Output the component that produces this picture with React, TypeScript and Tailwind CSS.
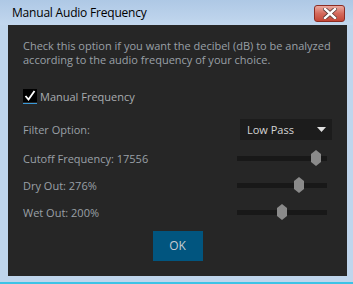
import React from "react";

function Thumb() {
  return (
    <svg width="10" height="16" viewBox="0 0 10 16" className="block">
      <polygon points="5,0 10,4 10,12 5,16 0,12 0,4" fill="#8a8a8a" />
    </svg>
  );
}

function SliderRow({ label, pos }: { label: string; pos: number }) {
  return (
    <div className="flex h-[27px] items-center justify-between">
      <span>{label}</span>
      <div className="relative mr-[5px] h-[5px] w-[90px] bg-[#181818]">
        <div className="absolute top-[-6px]" style={{ left: pos - 5 }}>
          <Thumb />
        </div>
      </div>
    </div>
  );
}

export default function App() {
  return (
    <div
      className="flex h-[284px] w-[353px] flex-col bg-[#bfd5ec] border-b-2 border-b-[#3cc3e6]"
      style={{ fontFamily: '"Segoe UI", "Open Sans", sans-serif' }}
    >
      <div className="flex h-[25px] items-center justify-between bg-gradient-to-b from-[#aec8e5] to-[#c2d7ee] pl-[12px] pr-[8px]">
        <span className="text-[12px] tracking-[-0.2px] text-black">Manual Audio Frequency</span>
        <div className="mt-[2px] flex h-[17px] w-[31px] items-center justify-center rounded-[3px] border border-[#8b2d24] bg-gradient-to-b from-[#eaa99f] via-[#d46a5c] to-[#c44636]">
          <svg width="14" height="11" viewBox="0 0 14 11">
            <path d="M2 1 L12 10 M12 1 L2 10" stroke="#5a3a36" strokeWidth="4" strokeLinecap="square" />
            <path d="M2 1 L12 10 M12 1 L2 10" stroke="#ffffff" strokeWidth="2.4" strokeLinecap="square" />
          </svg>
        </div>
      </div>
      <div className="ml-[8px] mr-[6px] flex h-[251px] flex-col bg-[#262626] px-[15px] pt-[14px] text-[11px] leading-[14px] text-[#9aa0a6]">
        <p className="leading-[14px]">
          Check this option if you want the decibel (dB) to be analyzed according to the audio frequency of your choice.
        </p>
        <div className="mt-[21px] flex h-[17px] items-center gap-[3px]">
          <div className="flex h-[15px] w-[14px] flex-col">
            <div className="flex h-[13px] w-[14px] items-center justify-center bg-black">
              <svg width="12" height="11" viewBox="0 0 12 11">
                <path d="M1.5 6 L4.5 9.5 L10.5 1" stroke="#ffffff" strokeWidth="1.8" fill="none" />
              </svg>
            </div>
            <div className="mt-[1px] h-[1px] w-[14px] bg-[#3a9ad9]" />
          </div>
          <span className="text-[#a8acb0]">Manual Frequency</span>
        </div>
        <div className="mt-[14px] flex h-[21px] items-center justify-between">
          <span>Filter Option:</span>
          <div className="flex h-[21px] w-[92px] items-center justify-between bg-[#1c1c1c] pl-[7px] pr-[6px] text-[#d4d4d4]">
            <span>Low Pass</span>
            <svg width="9" height="5" viewBox="0 0 9 5">
              <polygon points="0,0 9,0 4.5,5" fill="#e0e0e0" />
            </svg>
          </div>
        </div>
        <div className="mt-[5px] flex flex-col">
          <SliderRow label="Cutoff Frequency: 17556" pos={79} />
          <SliderRow label="Dry Out: 276%" pos={62} />
          <SliderRow label="Wet Out: 200%" pos={45} />
        </div>
        <div className="mt-[5px] flex justify-center">
          <button className="h-[30px] w-[50px] bg-[#01557f] text-[12px] text-[#c8ccd0]">OK</button>
        </div>
      </div>
    </div>
  );
}
